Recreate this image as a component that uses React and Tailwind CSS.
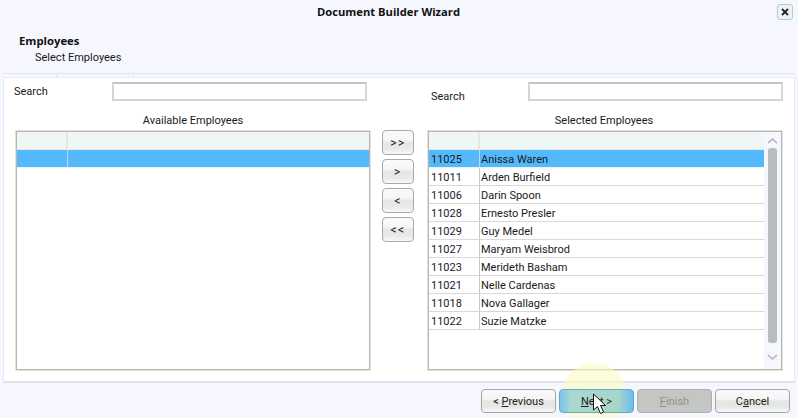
const font = { fontFamily: '"Roboto", "Open Sans", sans-serif' };

const rows = [
  ["11025", "Anissa Waren"],
  ["11011", "Arden Burfield"],
  ["11006", "Darin Spoon"],
  ["11028", "Ernesto Presler"],
  ["11029", "Guy Medel"],
  ["11027", "Maryam Weisbrod"],
  ["11023", "Merideth Basham"],
  ["11021", "Nelle Cardenas"],
  ["11018", "Nova Gallager"],
  ["11022", "Suzie Matzke"],
];

function Header() {
  return (
    <div className="flex h-[18px] bg-[#eef6f6] border-b border-[#e4eaea]">
      <div className="w-[51px] border-r-2 border-[#e2e8e8]" />
      <div className="flex-1" />
    </div>
  );
}

function SmallButton({ children }) {
  return (
    <button className="w-[32px] h-[25px] rounded-[4px] border border-[#a9a9a9] bg-[linear-gradient(#fafafa_0%,#f6f6f6_40%,#e6e6e6_50%,#e8e8e8_75%,#f8f8f8_100%)] text-[12px] leading-none text-[#222] tracking-[1.5px] flex items-center justify-center">
      {children}
    </button>
  );
}

function WizardButton({ className, children }) {
  return (
    <button className={"w-[75px] h-[24px] rounded-[4px] border flex items-center justify-center text-[11px] leading-none " + className}>
      {children}
    </button>
  );
}

export default function App() {
  return (
    <div className="relative w-[798px] h-[418px] overflow-hidden bg-[#f5f6fe] text-[#1a1a1a] text-[11px] leading-none" style={font}>
      <div className="relative flex justify-center items-center h-[24px] pr-[21px]">
        <span className="font-bold text-[11.2px] text-[#111] font-['Open_Sans']">Document Builder Wizard</span>
        <div className="absolute right-[5px] top-[4px] w-[16px] h-[16px] rounded-[3px] border border-[#a8cfd0] bg-[#eef3f6] flex items-center justify-center">
          <svg width="8" height="8" viewBox="0 0 8 8"><path d="M1 1L7 7M7 1L1 7" stroke="#222" strokeWidth="1.8" /></svg>
        </div>
      </div>

      <div className="pl-[19px] pt-[9px] h-[49px]">
        <div className="font-bold text-[11.3px] text-[#111] h-[16px] flex items-center font-['Open_Sans']">Employees</div>
        <div className="pl-[16px] h-[16px] flex items-center">Select Employees</div>
      </div>

      <div className="ml-[3px] w-[792px] h-[4px] border-t border-[#e2e6ee] flex">
        <div className="w-[54px] border-r border-[#e2e6ee]" />
        <div className="w-[77px] border-r border-[#e2e6ee]" />
      </div>

      <div className="ml-[3px] w-[792px] h-[306px] bg-white border border-[#e8ebf3] border-b-2 border-b-[#dfe4ec] flex">
        <div className="w-[367px] pl-[12px] shrink-0">
          <div className="flex h-[26px] -ml-[2px]">
            <div className="w-[98px] pt-[8px]">Search</div>
            <input className="w-[255px] h-[19px] mt-[4px] border-2 border-[#d6d6d6] border-t-[#c4c4c4] outline-none" />
          </div>
          <div className="w-[354px] h-[22px] flex items-center justify-center pt-[11px]">Available Employees</div>
          <div className="w-[354px] h-[239px] mt-[5px] border border-[#b6b6b2] shadow-[0_0_0_1px_#e2e2de] bg-white">
            <Header />
            <div className="flex h-[18px] bg-[#53b9fb] border-b border-[#e8f4fc]">
              <div className="w-[51px] border-r border-[#b5dcf4]" />
              <div className="flex-1" />
            </div>
          </div>
        </div>

        <div className="w-[57px] shrink-0 pl-[11px] pt-[52px] flex flex-col gap-[4px]">
          <SmallButton>&gt;&gt;</SmallButton>
          <SmallButton>&gt;</SmallButton>
          <SmallButton>&lt;</SmallButton>
          <SmallButton>&lt;&lt;</SmallButton>
        </div>

        <div className="flex-1">
          <div className="flex h-[26px]">
            <div className="w-[100px] pl-[3px] pt-[13px]">Search</div>
            <input className="w-[255px] h-[19px] mt-[4px] border-2 border-[#d6d6d6] border-t-[#c4c4c4] outline-none" />
          </div>
          <div className="w-[352px] h-[22px] flex items-center justify-center pt-[11px]">Selected Employees</div>
          <div className="w-[354px] h-[239px] mt-[5px] border border-[#b6b6b2] shadow-[0_0_0_1px_#e2e2de] bg-white flex">
            <div className="w-[335px]">
              <Header />
              {rows.map((r, i) => (
                <div key={r[0]} className={"flex h-[18px] items-center border-b " + (i === 0 ? "bg-[#53b9fb] border-[#e8f4fc]" : "border-[#d9d9d9]")}>
                  <div className={"w-[51px] h-full pl-[2px] pt-[1px] flex items-center border-r " + (i === 0 ? "border-[#b5dcf4]" : "border-[#c8c8c8]")}>{r[0]}</div>
                  <div className="flex-1 pl-[1px] pt-[1px]">{r[1]}</div>
                </div>
              ))}
            </div>
            <div className="flex-1 bg-[#f5f6fe] flex flex-col items-center">
              <svg className="mt-[6px]" width="11" height="6" viewBox="0 0 11 6"><path d="M1 5L5.5 1L10 5" fill="none" stroke="#b0b4b8" strokeWidth="1.5" /></svg>
              <div className="w-[9px] h-[195px] mt-[4px] rounded-[3px] bg-[#b8bcbc]" />
              <svg className="mt-[11px]" width="11" height="6" viewBox="0 0 11 6"><path d="M1 1L5.5 5L10 1" fill="none" stroke="#b0b4b8" strokeWidth="1.5" /></svg>
            </div>
          </div>
        </div>
      </div>

      <div className="flex gap-[3px] pl-[481px] pt-[6px]">
        <WizardButton className="border-[#a5a5a5] bg-[linear-gradient(#fafafa_0%,#f6f6f6_40%,#e4e6e4_50%,#e6e8e6_75%,#f8f8f8_100%)] text-[#222]">
          <span>&lt; <u>P</u>revious</span>
        </WizardButton>
        <WizardButton className="relative z-10 border-[#6aa7c4] bg-[linear-gradient(90deg,#7cc4ec_0%,#a8d8cf_15%,#a6d6c8_80%,#69bcf0_100%)] text-[#222]">
          <span><u>N</u>ext &gt;</span>
        </WizardButton>
        <WizardButton className="border-[#b0b0b0] bg-[#c4c6c4] text-[#8d8f8d]">
          <span><u>F</u>inish</span>
        </WizardButton>
        <WizardButton className="border-[#a5a5a5] bg-[linear-gradient(#fafafa_0%,#f6f6f6_40%,#e4e6e4_50%,#e6e8e6_75%,#f8f8f8_100%)] text-[#222]">
          <span>C<u>a</u>ncel</span>
        </WizardButton>
      </div>

      <div className="absolute left-[562px] top-[363px] w-[64px] h-[64px] rounded-full bg-[#fdfbc0]/60" />
      <svg className="absolute left-[592px] top-[393px] z-20" width="16" height="22" viewBox="0 0 16 22">
        <path d="M1.5 1V17L5.5 13.5L8.5 20.5L11.5 19L8.5 12.5H13.5Z" fill="#fff" stroke="#111" strokeWidth="1" />
      </svg>
    </div>
  );
}
